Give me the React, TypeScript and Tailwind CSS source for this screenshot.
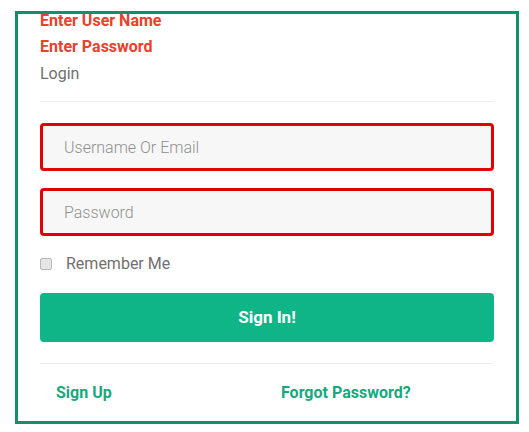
import React from 'react';

const App: React.FC = () => {
  return (
    <div className="w-[529px] h-[432px] bg-white pt-[11px] pl-[15px]" style={{ fontFamily: 'Roboto, "Liberation Sans", sans-serif' }}>
      <div className="w-[504px] h-[413px] border-[3px] border-[#13906b] px-[22px]">
        {/* Validation messages */}
        <div className="-mt-[6px]">
          <div className="text-[16px] leading-[26px] font-bold text-[#e8412c]">Enter User Name</div>
          <div className="text-[16px] leading-[26px] font-bold text-[#e8412c]">Enter Password</div>
          <div className="text-[16px] leading-[28px] text-[#707070]">Login</div>
        </div>

        <div className="mt-[13px] h-px bg-[#eeeeee]"></div>

        <form className="mt-[21px]" onSubmit={(e) => e.preventDefault()}>
          <input
            type="text"
            placeholder="Username Or Email"
            className="block w-full h-[48px] rounded-[4px] border-[3px] border-[#e40000] bg-[#f7f7f7] pl-[21px] text-[16px] font-light text-[#555] placeholder:text-[#8f8f8f] outline-none"
          />
          <input
            type="password"
            placeholder="Password"
            className="block w-full h-[48px] mt-[17px] rounded-[4px] border-[3px] border-[#e40000] bg-[#f7f7f7] pl-[21px] text-[16px] font-light text-[#555] placeholder:text-[#8f8f8f] outline-none"
          />

          <label className="mt-[19px] flex items-center gap-[14px] h-[18px]">
            <input
              type="checkbox"
              className="appearance-none w-[12px] h-[12px] m-0 rounded-[2px] border border-[#b9b9b9] bg-[#e6e6e6]"
            />
            <span className="text-[16px] text-[#707070]">Remember Me</span>
          </label>

          <button
            type="submit"
            className="mt-[20px] block w-full h-[49px] rounded-[4px] bg-[#0fb587] text-white text-[17px] font-bold"
          >
            Sign In!
          </button>
        </form>

        <div className="mt-[21px] h-px bg-[#eeeeee]"></div>

        <div className="grid grid-cols-2 mt-[19px]">
          <a href="#" className="pl-4 text-[16px] leading-[20px] font-bold text-[#17a87d]">Sign Up</a>
          <a href="#" className="pl-[14px] text-[16px] leading-[20px] font-bold text-[#17a87d]">Forgot Password?</a>
        </div>
      </div>
    </div>
  );
};

export default App;
